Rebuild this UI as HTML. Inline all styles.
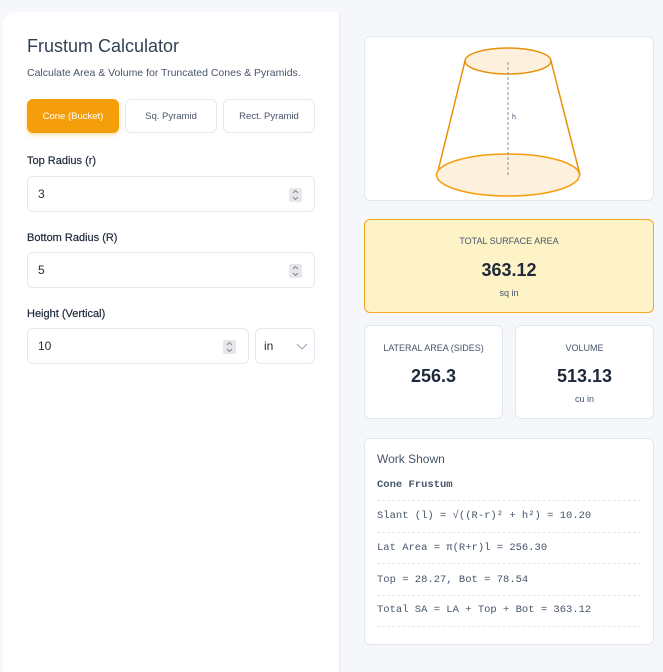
<!DOCTYPE html>
<html><head><style>
*{box-sizing:border-box;margin:0;padding:0}
body{width:663px;height:649px;background:#f5f7fa;font-family:"Liberation Sans",sans-serif;position:relative;overflow:hidden;color:#334155}
.left{position:absolute;left:3px;top:12px;width:337px;height:660px;background:#fff;border-radius:12px 0 0 0;border-right:1px solid #e8ecf1}
.a{position:absolute}
h1{position:absolute;left:27px;top:36px;font-size:18px;font-weight:normal;color:#334155}
.sub{left:27px;top:67px;font-size:10.5px;color:#475569}
.btn{position:absolute;top:99px;width:92px;height:34px;border:1px solid #e2e8f0;border-radius:6px;font-size:9.5px;color:#475569;display:flex;align-items:center;justify-content:center;background:#fff}
.btn.on{background:#f59e0b;border-color:#f59e0b;color:#fff;box-shadow:0 2px 5px rgba(245,158,11,.35)}
.lbl{position:absolute;left:27px;font-size:11px;color:#1e293b;-webkit-text-stroke:0.2px #1e293b}
.inp{position:absolute;height:36px;border:1px solid #e2e8f0;border-radius:6px;font-size:12px;color:#1e293b;padding-left:10px;display:flex;align-items:center;background:#fff}
.sp{position:absolute;right:12px;top:11px;width:13px;height:14px;background:#e5e7eb;border-radius:2px}
.card{position:absolute;background:#fff;border:1px solid #e2e8f0;border-radius:6px}
.cap{position:absolute;width:100%;text-align:center;font-size:9px;color:#475569}
.big{position:absolute;width:100%;text-align:center;font-size:18px;font-weight:bold;color:#1e293b}
.unit{position:absolute;width:100%;text-align:center;font-size:9px;color:#475569}
.mono{position:absolute;left:12px;font-family:"Liberation Mono",monospace;font-size:10.5px;color:#475569}
.dl{position:absolute;left:12px;right:12px;border-top:1px dashed #e2e8f0}
</style></head><body>
<div class="left"></div>
<h1>Frustum Calculator</h1>
<div class="a sub">Calculate Area &amp; Volume for Truncated Cones &amp; Pyramids.</div>
<div class="btn on" style="left:27px">Cone (Bucket)</div>
<div class="btn" style="left:125px">Sq. Pyramid</div>
<div class="btn" style="left:223px">Rect. Pyramid</div>
<div class="lbl" style="top:155px">Top Radius (r)</div>
<div class="inp" style="left:27px;top:176px;width:288px">3<svg class="sp" viewBox="0 0 13 14"><path d="M4 5l2.5-2.5L9 5M4 9l2.5 2.5L9 9" stroke="#888" fill="none"/></svg></div>
<div class="lbl" style="top:232px">Bottom Radius (R)</div>
<div class="inp" style="left:27px;top:252px;width:288px">5<svg class="sp" viewBox="0 0 13 14"><path d="M4 5l2.5-2.5L9 5M4 9l2.5 2.5L9 9" stroke="#888" fill="none"/></svg></div>
<div class="lbl" style="top:308px">Height (Vertical)</div>
<div class="inp" style="left:27px;top:328px;width:222px">10<svg class="sp" viewBox="0 0 13 14"><path d="M4 5l2.5-2.5L9 5M4 9l2.5 2.5L9 9" stroke="#888" fill="none"/></svg></div>
<div class="inp" style="left:255px;top:328px;width:60px;padding-left:8px">in<svg class="a" style="right:6px;top:14px" width="12" height="8"><path d="M1 1l5 5 5-5" stroke="#94a3b8" fill="none"/></svg></div>

<div class="card" style="left:364px;top:36px;width:290px;height:165px"></div>
<svg class="a" style="left:0;top:0" width="663" height="220">
<path d="M465 61 L437 175 M551 61 L580 175" stroke="#e8900a" stroke-width="1.5"/>
<ellipse cx="508" cy="175" rx="71.5" ry="21" fill="#fdf0dc" stroke="#f59e0b" stroke-width="1.5"/>
<ellipse cx="508" cy="61" rx="43" ry="13" fill="#fdf0dc" stroke="#e8900a" stroke-width="1.5"/>
<line x1="508" y1="62" x2="508" y2="176" stroke="#8b93a1" stroke-dasharray="3,2"/>
<text x="512" y="119" font-size="7" fill="#475569" font-family="Liberation Sans">h</text>
</svg>
<div class="card" style="left:364px;top:219px;width:290px;height:94px;background:#fef3c7;border-color:#f5a623">
<div class="cap" style="top:16px">TOTAL SURFACE AREA</div>
<div class="big" style="top:40px">363.12</div>
<div class="unit" style="top:68px">sq in</div></div>
<div class="card" style="left:364px;top:325px;width:139px;height:94px">
<div class="cap" style="top:17px">LATERAL AREA (SIDES)</div>
<div class="big" style="top:40px">256.3</div></div>
<div class="card" style="left:515px;top:325px;width:139px;height:94px">
<div class="cap" style="top:17px">VOLUME</div>
<div class="big" style="top:40px">513.13</div>
<div class="unit" style="top:68px">cu in</div></div>
<div class="card" style="left:364px;top:438px;width:290px;height:207px">
<div class="a" style="left:12px;top:13px;font-size:12px;color:#475569">Work Shown</div>
<div class="mono" style="top:40px;font-weight:bold">Cone Frustum</div>
<div class="dl" style="top:61px"></div>
<div class="mono" style="top:71px">Slant (l) = √((R-r)² + h²) = 10.20</div>
<div class="dl" style="top:93px"></div>
<div class="mono" style="top:103px">Lat Area = π(R+r)l = 256.30</div>
<div class="dl" style="top:124px"></div>
<div class="mono" style="top:135px">Top = 28.27, Bot = 78.54</div>
<div class="dl" style="top:156px"></div>
<div class="mono" style="top:165px">Total SA = LA + Top + Bot = 363.12</div>
<div class="dl" style="top:187px"></div>
</div>
</body></html>
